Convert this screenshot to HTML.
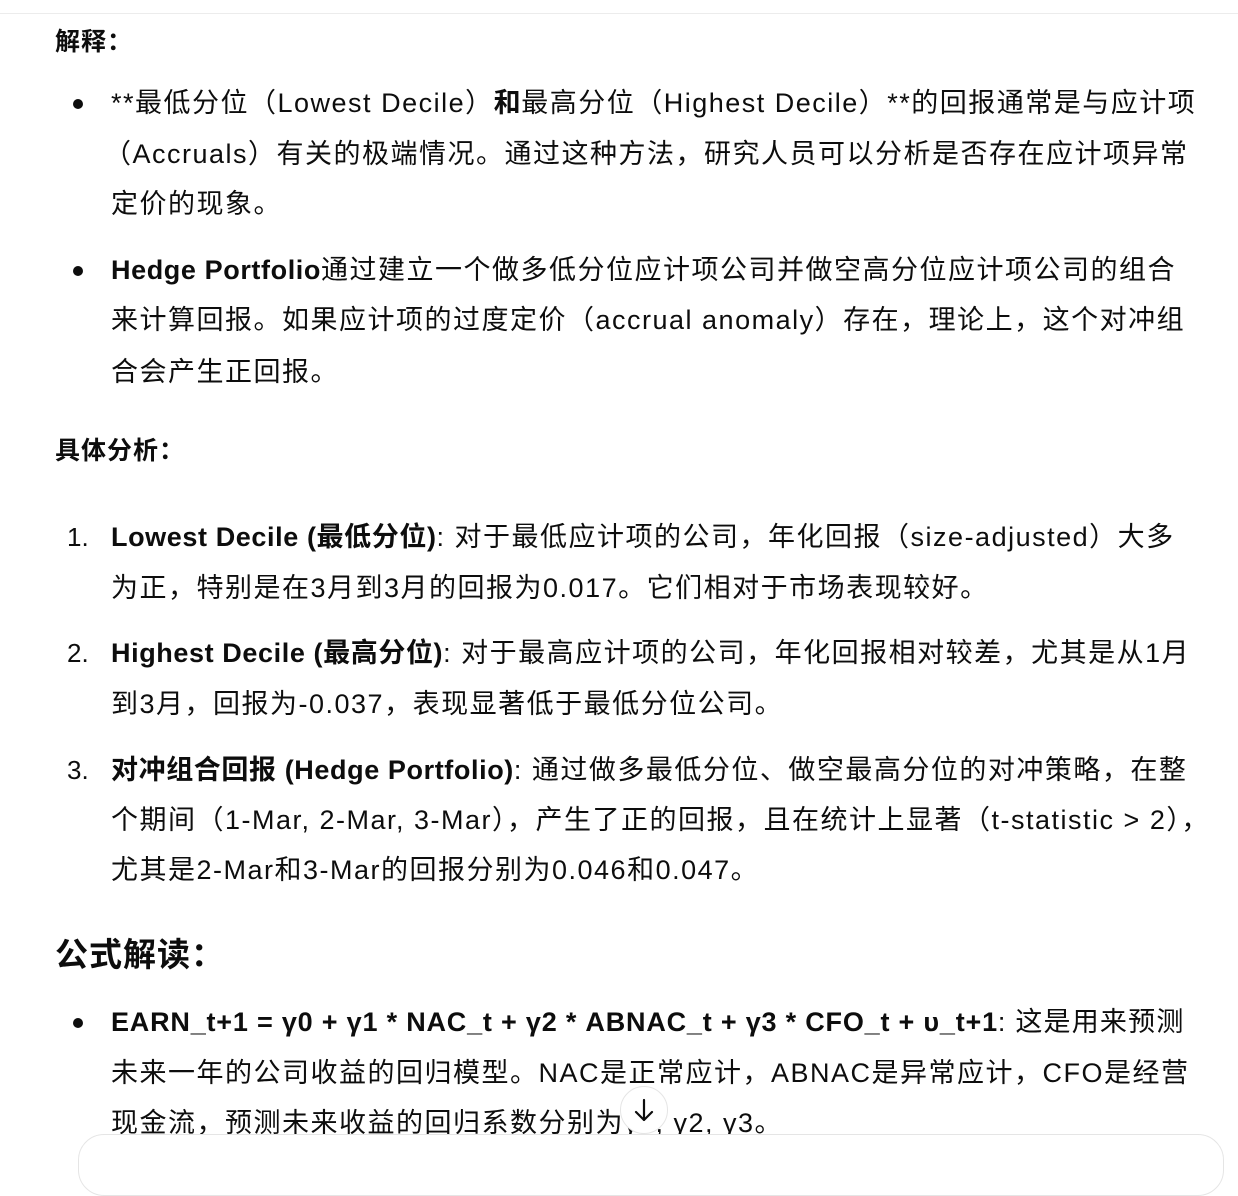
<!DOCTYPE html>
<html><head><meta charset="utf-8"><style>
html,body{margin:0;padding:0;background:#fff;}
body{width:1238px;height:1146px;position:relative;overflow:hidden;color:#0d0d0d;font-family:"Liberation Sans","Noto Sans CJK SC",sans-serif;}
.l{position:absolute;left:111px;white-space:nowrap;font-size:27px;line-height:50px;height:50px;letter-spacing:1.5px;}
.h{position:absolute;left:55px;white-space:nowrap;font-size:25px;font-weight:bold;line-height:40px;letter-spacing:1px;}
.b{position:absolute;left:73px;width:10px;height:10px;border-radius:50%;background:#0d0d0d;}
.n{position:absolute;left:67px;font-size:26px;line-height:50px;}
b{font-weight:bold;letter-spacing:0.6px;}
</style></head><body>
<div style="position:absolute;left:0;right:0;top:13px;height:1px;background:#ececec"></div>
<div class="h" style="top:22px">解释：</div>
<div class="b" style="top:99px"></div>
<div class="l" style="top:78px">**最低分位（Lowest Decile）<b>和</b>最高分位（Highest Decile）**的回报通常是与应计项</div>
<div class="l" style="top:129px;left:104px">（Accruals）有关的极端情况。通过这种方法，研究人员可以分析是否存在应计项异常</div>
<div class="l" style="top:179px">定价的现象。</div>
<div class="b" style="top:266px"></div>
<div class="l" style="top:245px"><b>Hedge Portfolio</b>通过建立一个做多低分位应计项公司并做空高分位应计项公司的组合</div>
<div class="l" style="top:295px">来计算回报。如果应计项的过度定价（accrual anomaly）存在，理论上，这个对冲组</div>
<div class="l" style="top:347px">合会产生正回报。</div>
<div class="h" style="top:431px">具体分析：</div>
<div class="n" style="top:512px">1.</div>
<div class="l" style="top:512px"><b>Lowest Decile (最低分位)</b>: 对于最低应计项的公司，年化回报（size-adjusted）大多</div>
<div class="l" style="top:563px">为正，特别是在3月到3月的回报为0.017。它们相对于市场表现较好。</div>
<div class="n" style="top:628px">2.</div>
<div class="l" style="top:628px"><b>Highest Decile (最高分位)</b>: 对于最高应计项的公司，年化回报相对较差，尤其是从1月</div>
<div class="l" style="top:679px">到3月，回报为-0.037，表现显著低于最低分位公司。</div>
<div class="n" style="top:745px">3.</div>
<div class="l" style="top:745px"><b>对冲组合回报 (Hedge Portfolio)</b>: 通过做多最低分位、做空最高分位的对冲策略，在整</div>
<div class="l" style="top:795px">个期间（1-Mar, 2-Mar, 3-Mar），产生了正的回报，且在统计上显著（t-statistic &gt; 2），</div>
<div class="l" style="top:845px">尤其是2-Mar和3-Mar的回报分别为0.046和0.047。</div>
<div class="h" style="top:933px;font-size:33px;line-height:44px">公式解读：</div>
<div class="b" style="top:1018px"></div>
<div class="l" style="top:997px;letter-spacing:1.2px"><b style="letter-spacing:0.8px">EARN_t+1 = γ0 + γ1 * NAC_t + γ2 * ABNAC_t + γ3 * CFO_t + υ_t+1</b>: 这是用来预测</div>
<div class="l" style="top:1048px">未来一年的公司收益的回归模型。NAC是正常应计，ABNAC是异常应计，CFO是经营</div>
<div class="l" style="top:1098px">现金流，预测未来收益的回归系数分别为γ1, γ2, γ3。</div>
<div style="position:absolute;left:78px;top:1134px;width:1144px;height:60px;border:1px solid #e5e5e5;border-radius:26px;background:#fff"></div>
<div style="position:absolute;left:620px;top:1086px;width:46px;height:46px;border-radius:50%;border:1px solid #e5e5e5;background:#fff">
<svg width="46" height="46" viewBox="0 0 46 46" style="position:absolute;left:0;top:0"><path d="M23 13v20M15 25l8 8 8-8" fill="none" stroke="#0d0d0d" stroke-width="2.2" stroke-linecap="round" stroke-linejoin="round"/></svg>
</div>
</body></html>
